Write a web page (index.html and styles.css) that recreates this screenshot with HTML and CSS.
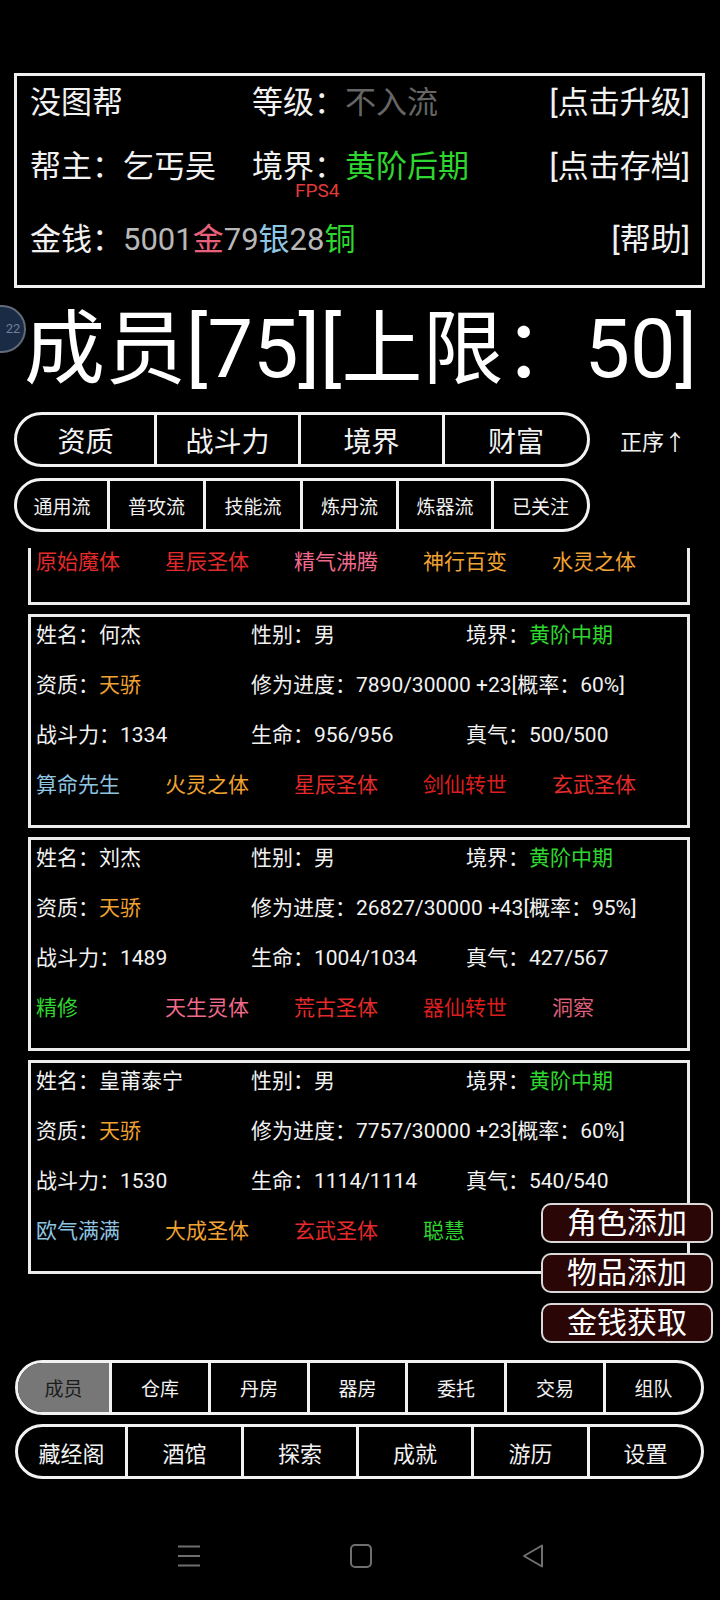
FILE: index.html
```html
<!DOCTYPE html>
<html lang="zh-CN">
<head>
<meta charset="utf-8">
<title>成员</title>
<link rel="stylesheet" href="styles.css">
</head>
<body>
<div class="status"></div>
<section class="guild">
  <div class="g-row">
    <div>没图帮</div>
    <div>等级：<span class="muted">不入流</span></div>
    <div class="right">[点击升级]</div>
  </div>
  <div class="g-row r2">
    <div>帮主：乞丐吴</div>
    <div class="realm">境界：<span class="green">黄阶后期</span><span class="fps">FPS4</span></div>
    <div class="right">[点击存档]</div>
  </div>
  <div class="g-row r3">
    <div>金钱：<span class="num">5001</span><span class="gold">金</span><span class="num">79</span><span class="silver">银</span><span class="num">28</span><span class="green">铜</span></div>
    <div class="right">[帮助]</div>
  </div>
</section>
<div class="avatar">22</div>
<h1 class="title">成员[75][上限：50]</h1>
<div class="sort-row">
  <div class="pill sort-bar">
    <div class="seg">资质</div>
    <div class="seg">战斗力</div>
    <div class="seg">境界</div>
    <div class="seg">财富</div>
  </div>
  <div class="order">正序↑</div>
</div>
<div class="pill filter-bar">
  <div class="seg">通用流</div>
  <div class="seg">普攻流</div>
  <div class="seg">技能流</div>
  <div class="seg">炼丹流</div>
  <div class="seg">炼器流</div>
  <div class="seg">已关注</div>
</div>
<div class="list">
  <div class="cards">
    <div class="card">
      <div class="row"></div>
      <div class="row"></div>
      <div class="row"></div>
      <div class="row traits">
        <div class="red">原始魔体</div><div class="red">星辰圣体</div><div class="pink">精气沸腾</div><div class="orange">神行百变</div><div class="orange">水灵之体</div>
      </div>
    </div>
    <div class="card">
      <div class="row"><div>姓名：何杰</div><div>性别：男</div><div>境界：<span class="green">黄阶中期</span></div></div>
      <div class="row"><div>资质：<span class="orange">天骄</span></div><div class="wide">修为进度：7890/30000 +23[概率：60%]</div></div>
      <div class="row"><div>战斗力：1334</div><div>生命：956/956</div><div>真气：500/500</div></div>
      <div class="row traits">
        <div class="blue">算命先生</div><div class="orange">火灵之体</div><div class="red">星辰圣体</div><div class="dred">剑仙转世</div><div class="red">玄武圣体</div>
      </div>
    </div>
    <div class="card">
      <div class="row"><div>姓名：刘杰</div><div>性别：男</div><div>境界：<span class="green">黄阶中期</span></div></div>
      <div class="row"><div>资质：<span class="orange">天骄</span></div><div class="wide">修为进度：26827/30000 +43[概率：95%]</div></div>
      <div class="row"><div>战斗力：1489</div><div>生命：1004/1034</div><div>真气：427/567</div></div>
      <div class="row traits">
        <div class="green">精修</div><div class="pink">天生灵体</div><div class="red">荒古圣体</div><div class="dred">器仙转世</div><div class="rose">洞察</div>
      </div>
    </div>
    <div class="card">
      <div class="row"><div>姓名：皇莆泰宁</div><div>性别：男</div><div>境界：<span class="green">黄阶中期</span></div></div>
      <div class="row"><div>资质：<span class="orange">天骄</span></div><div class="wide">修为进度：7757/30000 +23[概率：60%]</div></div>
      <div class="row"><div>战斗力：1530</div><div>生命：1114/1114</div><div>真气：540/540</div></div>
      <div class="row traits">
        <div class="blue">欧气满满</div><div class="orange">大成圣体</div><div class="red">玄武圣体</div><div class="green">聪慧</div>
      </div>
    </div>
  </div>
</div>
<div class="fabs">
  <div class="fab">角色添加</div>
  <div class="fab">物品添加</div>
  <div class="fab">金钱获取</div>
</div>
<nav class="pill nav1">
  <div class="seg active">成员</div>
  <div class="seg">仓库</div>
  <div class="seg">丹房</div>
  <div class="seg">器房</div>
  <div class="seg">委托</div>
  <div class="seg">交易</div>
  <div class="seg">组队</div>
</nav>
<nav class="pill nav2">
  <div class="seg">藏经阁</div>
  <div class="seg">酒馆</div>
  <div class="seg">探索</div>
  <div class="seg">成就</div>
  <div class="seg">游历</div>
  <div class="seg">设置</div>
</nav>
<div class="sysnav">
  <svg class="sys-icon" viewBox="0 0 24 24" width="24" height="24"><path d="M1 2.5H23M1 12H23M1 21.5H23" stroke="#6f6f6f" stroke-width="2" fill="none"/></svg>
  <svg class="sys-icon" viewBox="0 0 24 24" width="24" height="24"><rect x="2" y="1" width="20" height="22" rx="4" stroke="#6f6f6f" stroke-width="2" fill="none"/></svg>
  <svg class="sys-icon" viewBox="0 0 24 24" width="24" height="24"><path d="M21 1.5V22.5L3 12Z" stroke="#6f6f6f" stroke-width="2" fill="none" stroke-linejoin="round"/></svg>
</div>
</body>
</html>
```

FILE: styles.css
```css
* { box-sizing: border-box; margin: 0; padding: 0; }
html, body { background: #000; }
body {
  width: 720px;
  height: 1600px;
  overflow: hidden;
  position: relative;
  font-family: Roboto, "Noto Sans CJK SC", sans-serif;
  color: #f2f2f2;
}
.status { height: 73px; }

.guild {
  margin-left: 14px;
  width: 691px;
  height: 215px;
  border: 3px solid #f0f0f0;
  padding: 0 12px 0 13px;
}
.g-row {
  display: grid;
  grid-template-columns: 222px 1fr auto;
  height: 54px;
  line-height: 54px;
  font-size: 31px;
  white-space: nowrap;
}
.r2 { margin-top: 10px; }
.r3 { margin-top: 19px; grid-template-columns: 1fr auto; }
.right { text-align: right; }
.realm { position: relative; }
.fps {
  position: absolute;
  left: 43px;
  top: 41px;
  font-size: 19px;
  line-height: 20px;
  color: #e23a3a;
}
.muted { color: #666; }
.num { color: #b8b8b8; }
.gold { color: #e8607c; }
.silver { color: #8ec6e4; }
.green { color: #2fd62f; }

.avatar {
  position: absolute;
  left: -22px;
  top: 305px;
  width: 48px;
  height: 48px;
  border-radius: 50%;
  background: #1a2b45;
  border: 2px solid #616a7a;
  color: #6f7f98;
  font-size: 13px;
  line-height: 44px;
  text-align: center;
  padding-left: 22px;
}

.title {
  font-size: 81px;
  font-weight: 400;
  line-height: 124px;
  height: 124px;
  padding-left: 24px;
  white-space: nowrap;
  color: #fff;
}

.pill {
  display: grid;
  border: 3px solid #f2f2f2;
  border-radius: 28px;
  overflow: hidden;
}
.seg {
  display: flex;
  align-items: center;
  justify-content: center;
  border-left: 3px solid #f2f2f2;
  white-space: nowrap;
}
.seg:first-child { border-left: 0; }

.sort-row {
  display: flex;
  align-items: center;
  margin-left: 14px;
  height: 55px;
}
.sort-bar {
  width: 576px;
  height: 55px;
  grid-template-columns: 137px 144px 144px 1fr;
  font-size: 28px;
}
.order {
  margin-left: 30px;
  font-size: 22px;
}
.filter-bar {
  margin: 11px 0 0 14px;
  width: 576px;
  height: 54px;
  grid-template-columns: 90px 96px 97px 96px 95px 1fr;
  font-size: 19px;
}

.list {
  margin-top: 16px;
  height: 802px;
  overflow: hidden;
}
.cards {
  margin-top: -157px;
  padding-left: 28px;
  display: flex;
  flex-direction: column;
  gap: 9px;
}
.card {
  flex: none;
  width: 662px;
  height: 214px;
  border: 3px solid #ececec;
  padding: 0 5px;
}
.row {
  display: grid;
  grid-template-columns: 215px 215px 215px;
  height: 36px;
  line-height: 36px;
  font-size: 21px;
  margin-bottom: 14px;
  white-space: nowrap;
}
.row .wide { grid-column: span 2; }
.traits { grid-template-columns: repeat(5, 129px); }
.red { color: #e42a2a; }
.dred { color: #d81e1e; }
.pink { color: #f06a8c; }
.rose { color: #df5f78; }
.orange { color: #f0a232; }
.blue { color: #8ec4e0; }

.fabs {
  position: absolute;
  left: 541px;
  top: 1203px;
  display: flex;
  flex-direction: column;
  gap: 10px;
}
.fab {
  width: 172px;
  height: 40px;
  border: 2px solid #d8d8d8;
  border-radius: 10px;
  background: #2a0606;
  color: #fff;
  font-size: 30px;
  line-height: 36px;
  text-align: center;
}

.nav1 {
  margin: 10px 0 0 15px;
  width: 689px;
  height: 55px;
  grid-template-columns: 91px 99px 99px 98px 99px 99px 1fr;
  font-size: 19px;
}
.active { background: #777; color: #1c1c1c; }
.nav2 {
  margin: 9px 0 0 15px;
  width: 689px;
  height: 55px;
  grid-template-columns: 107px 116px 115px 115px 116px 1fr;
  font-size: 22px;
}

.sysnav {
  height: 121px;
  display: flex;
  align-items: flex-start;
  padding: 65px 0 0 177px;
  gap: 148px;
}
.sys-icon { display: block; }
```
